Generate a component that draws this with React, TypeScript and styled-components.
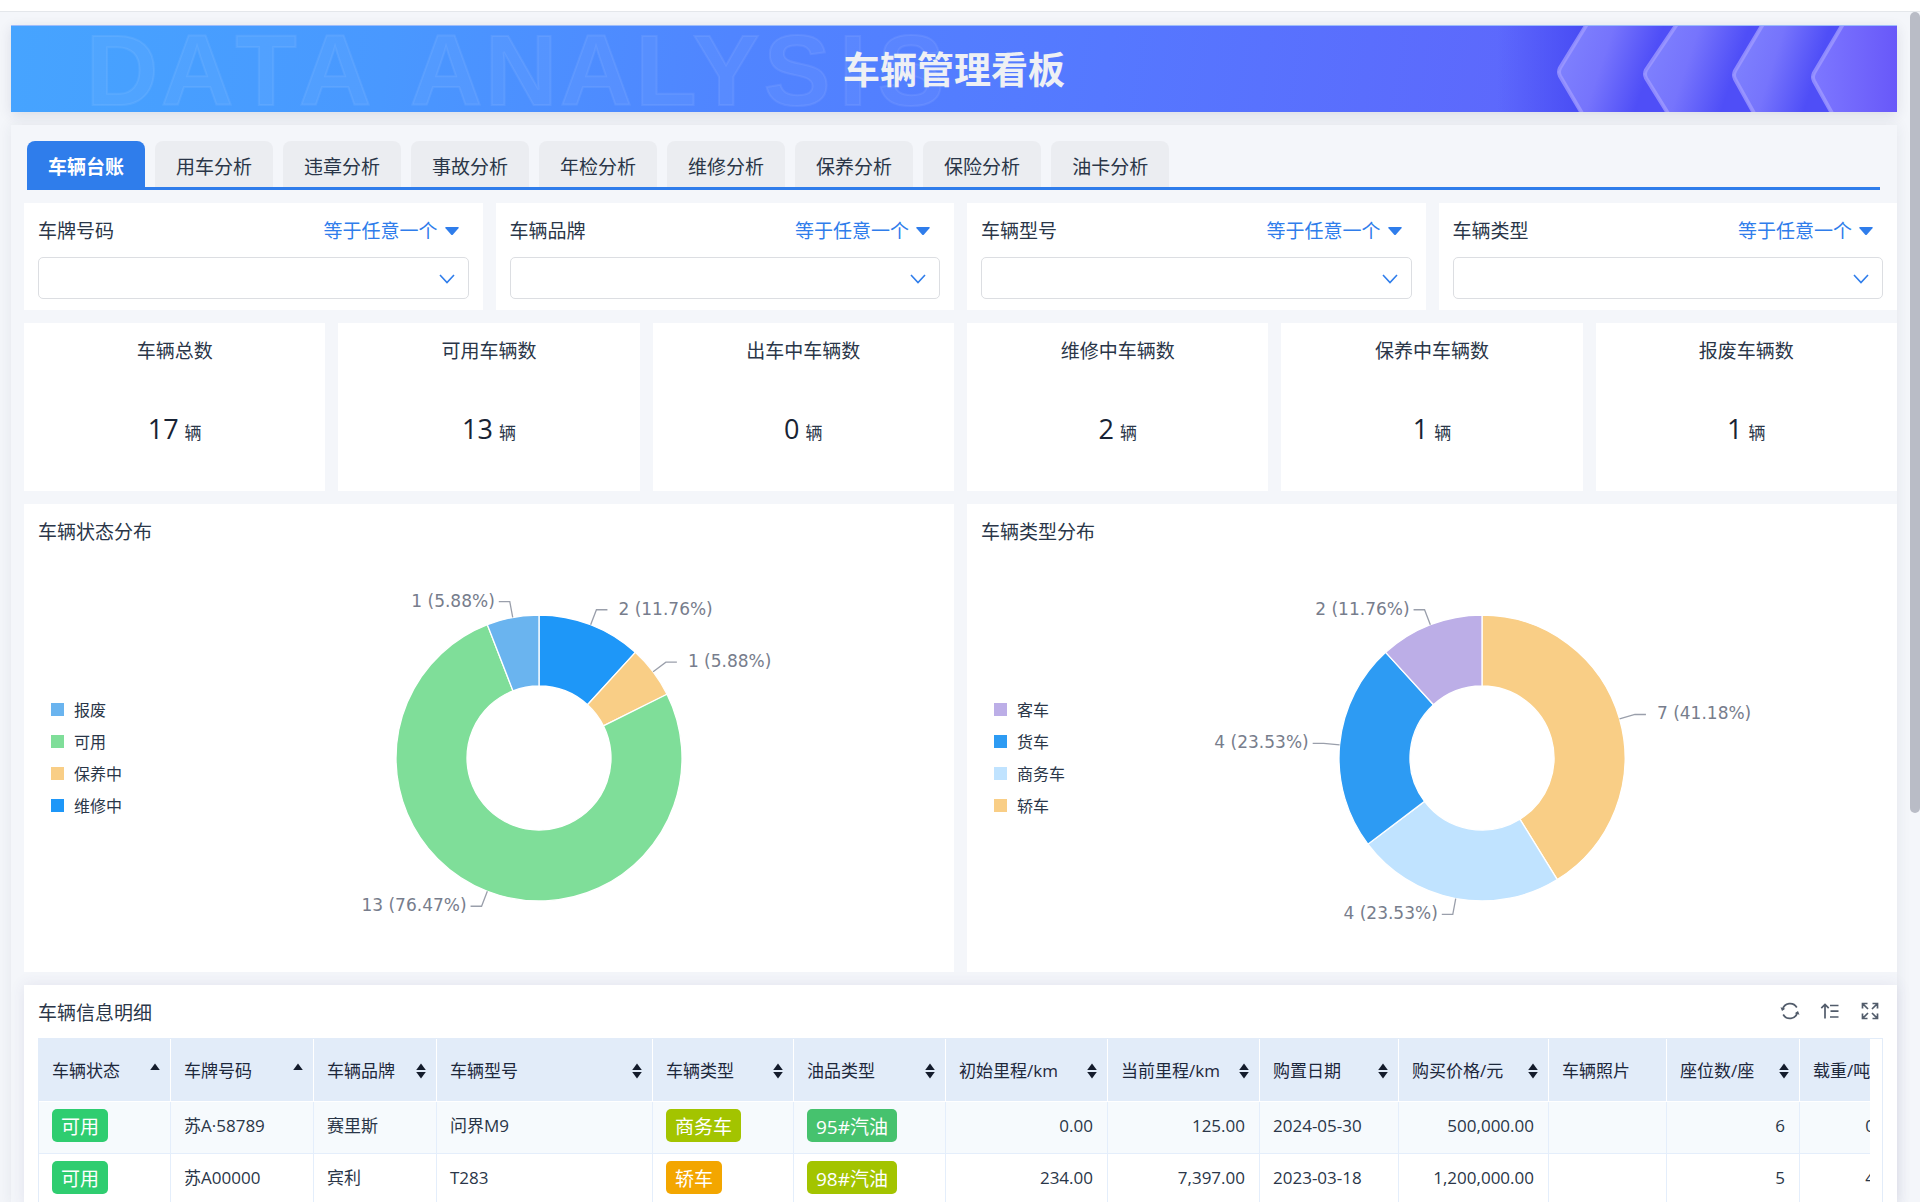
import React from "react";
import styled, { createGlobalStyle } from "styled-components";

const uiFont = `"Open Sans", "Noto Sans CJK SC", sans-serif`;
const blue = "#2f7deb";
const ink = "#2a3648";

const GlobalStyle = createGlobalStyle`
  * { box-sizing: border-box; }
  body { margin: 0; background: #f4f6fa; color: ${ink}; font-family: ${uiFont}; font-size: 19px; line-height: 28px; }
  button, select { font: inherit; color: inherit; }
  h1, h2 { margin: 0; font-weight: 400; font-size: 19px; }
`;

const Shell = styled.div`
  position: relative;
  height: 100vh;
  overflow: hidden;
  display: flex;
  flex-direction: column;
`;

const TopStrip = styled.div`
  flex: none;
  height: 12px;
  background: #fff;
  border-bottom: 1px solid #e4e7eb;
`;

const ScrollThumb = styled.div`
  position: absolute;
  top: 12px;
  right: 0;
  width: 10px;
  height: 801px;
  border-radius: 5px;
  background: #b9bcc6;
`;

const Main = styled.main`
  flex: none;
  padding: 13px 23px 0 11px;
  display: flex;
  flex-direction: column;
  gap: 13px;
`;

const Banner = styled.header`
  position: relative;
  height: 87px;
  overflow: hidden;
  display: flex;
  align-items: center;
  justify-content: center;
  border-top: 1px solid #9dbcfb;
  background: linear-gradient(98deg, #46a4ff 0%, #4998ff 20%, #5085ff 38%, #5578ff 58%, #5d68fc 80%, #5a5cf8 100%);
`;

const BannerShadow = styled.div`
  box-shadow: 0 3px 12px rgba(40, 45, 80, 0.12);
`;

const BannerTitle = styled.h1`
  position: relative;
  padding-top: 2px;
  font-size: 37px;
  line-height: 54px;
  font-weight: 700;
  color: #eef0f4;
`;

const LetterArt = styled.svg`
  position: absolute;
  left: 0;
  top: -1px;
  width: 960px;
  height: 87px;
`;

const ChevronArt = styled.svg`
  position: absolute;
  right: 0;
  top: 0;
  width: 400px;
  height: 87px;
`;

const Panel = styled.div`
  padding: 16px 0 0 13px;
  box-shadow: 0 0 14px rgba(40, 45, 80, 0.08);
  background: #f4f6fa;
  display: flex;
  flex-direction: column;
  gap: 13px;
`;

const Tabs = styled.nav`
  display: flex;
  gap: 10px;
  height: 49px;
  margin: 0 17px 0 3px;
  border-bottom: 3px solid ${blue};
`;

const Tab = styled.button<{ $active?: boolean }>`
  border: 0;
  padding: 6px 21px 0;
  border-radius: 8px 8px 0 0;
  background: ${(p) => (p.$active ? blue : "#ebedf1")};
  color: ${(p) => (p.$active ? "#fff" : ink)};
  font-weight: ${(p) => (p.$active ? 700 : 400)};
`;

const Grid = styled.div<{ $cols: number }>`
  display: grid;
  grid-template-columns: repeat(${(p) => p.$cols}, minmax(0, 1fr));
  gap: 13px;
`;

const Card = styled.section`
  background: #fff;
`;

const FilterCard = styled(Card)`
  padding: 14px 14px 11px;
  display: flex;
  flex-direction: column;
  gap: 12px;
`;

const FilterHead = styled.div`
  display: flex;
  justify-content: space-between;
  align-items: center;
`;

const Operator = styled.button`
  border: 0;
  padding: 0 10px 0 0;
  background: none;
  color: ${blue};
  display: flex;
  align-items: center;
  gap: 7px;
`;

const SelectWrap = styled.div`
  position: relative;
  height: 42px;
`;

const Select = styled.select`
  appearance: none;
  width: 100%;
  height: 42px;
  padding: 0 40px 0 12px;
  border: 1px solid #dcdee2;
  border-radius: 5px;
  background: #fff;
`;

const Chevron = styled.svg`
  position: absolute;
  right: 14px;
  top: 17px;
  pointer-events: none;
`;

const StatCard = styled(Card)`
  height: 168px;
  padding-top: 14px;
  text-align: center;
`;

const StatValue = styled.div`
  margin-top: 43px;
  font-size: 27px;
  line-height: 42px;
  display: flex;
  justify-content: center;
  align-items: baseline;
  gap: 6px;
  color: #182334;
`;

const Unit = styled.span`
  font-size: 17px;
  color: ${ink};
`;

const ChartCard = styled(Card)`
  height: 468px;
  padding: 14px 14px 3px;
  display: flex;
  flex-direction: column;
`;

const ChartBody = styled.div`
  flex: 1;
  display: flex;
  align-items: center;
`;

const Legend = styled.ul`
  flex: none;
  width: 150px;
  margin: 0;
  padding: 0 0 0 13px;
  list-style: none;
  display: flex;
  flex-direction: column;
  gap: 8px;
  font-size: 16px;
  line-height: 24px;
`;

const LegendItem = styled.li`
  display: flex;
  align-items: center;
  gap: 10px;
`;

const Swatch = styled.span<{ $color: string }>`
  width: 13px;
  height: 13px;
  background: ${(p) => p.$color};
`;

const Donut = styled.svg`
  flex: none;
  width: 700px;
  height: 400px;
`;

const SliceLabel = styled.text`
  font-family: "DejaVu Sans", sans-serif;
  font-size: 17px;
  fill: #777d8c;
`;

const TableCard = styled(Card)`
  padding: 14px 14px 0;
  box-shadow: 0 0 14px rgba(70, 60, 130, 0.1);
`;

const TableHead = styled.div`
  display: flex;
  justify-content: space-between;
  align-items: center;
  margin-bottom: 11px;
`;

const Tools = styled.div`
  display: flex;
  gap: 20px;
  padding: 0 3px 4px 0;
`;

const Tool = styled.button`
  display: flex;
  border: 0;
  padding: 0;
  background: none;
  width: 20px;
  height: 20px;
  color: #525c6b;
`;

const TableFrame = styled.div`
  border: 1px solid #e2ecf9;
  border-bottom: 0;
  padding-right: 12px;
`;

const TableScroll = styled.div`
  overflow: hidden;
`;

const Table = styled.table`
  table-layout: fixed;
  width: 1875px;
  border-collapse: separate;
  border-spacing: 0;
  font-size: 17px;
  line-height: 26px;
`;

const Th = styled.th`
  height: 63px;
  padding: 2px 10px 0 13px;
  font-weight: 400;
  text-align: left;
  background: #e2ecf9;
  border-right: 1px solid #fff;
  border-bottom: 1px solid #fff;
  color: #1d283c;
`;

const ThInner = styled.div`
  display: flex;
  justify-content: space-between;
  align-items: center;
  white-space: nowrap;
`;

const Td = styled.td<{ $num?: boolean }>`
  height: 52px;
  padding: 0 14px 4px 13px;
  white-space: nowrap;
  text-align: ${(p) => (p.$num ? "right" : "left")};
  border-right: 1px solid #e4eefb;
  border-bottom: 1px solid #e4eefb;
`;

const Tr = styled.tr<{ $alt?: boolean }>`
  background: ${(p) => (p.$alt ? "#f6fafd" : "#fff")};
`;

const Tag = styled.span<{ $color: string }>`
  display: inline-block;
  vertical-align: middle;
  padding: 4px 9px 0;
  border-radius: 5px;
  background: ${(p) => p.$color};
  color: #fff;
  font-size: 19px;
  line-height: 29px;
`;

const tabs = ["车辆台账", "用车分析", "违章分析", "事故分析", "年检分析", "维修分析", "保养分析", "保险分析", "油卡分析"];
const filters = ["车牌号码", "车辆品牌", "车辆型号", "车辆类型"];
const stats: [string, number][] = [
  ["车辆总数", 17],
  ["可用车辆数", 13],
  ["出车中车辆数", 0],
  ["维修中车辆数", 2],
  ["保养中车辆数", 1],
  ["报废车辆数", 1],
];

type Slice = { name: string; value: number; color: string };
const statusSlices: Slice[] = [
  { name: "维修中", value: 2, color: "#1e97f8" },
  { name: "保养中", value: 1, color: "#f9ce86" },
  { name: "可用", value: 13, color: "#7fde99" },
  { name: "报废", value: 1, color: "#6ab4ef" },
];
const typeSlices: Slice[] = [
  { name: "轿车", value: 7, color: "#f9ce86" },
  { name: "商务车", value: 4, color: "#c0e3ff" },
  { name: "货车", value: 4, color: "#2d9bf3" },
  { name: "客车", value: 2, color: "#bcaee7" },
];

const bannerLetters: [string, number][] = [
  ["D", 111], ["A", 186], ["T", 255], ["A", 324], ["A", 435], ["N", 510], ["A", 585],
  ["L", 655], ["Y", 715], ["S", 786], ["I", 842], ["S", 900],
];

const columns: { title: string; width: number; sort?: "up" | "both" }[] = [
  { title: "车辆状态", width: 132, sort: "up" },
  { title: "车牌号码", width: 143, sort: "up" },
  { title: "车辆品牌", width: 123, sort: "both" },
  { title: "车辆型号", width: 216, sort: "both" },
  { title: "车辆类型", width: 141, sort: "both" },
  { title: "油品类型", width: 152, sort: "both" },
  { title: "初始里程/km", width: 162, sort: "both" },
  { title: "当前里程/km", width: 152, sort: "both" },
  { title: "购置日期", width: 139, sort: "both" },
  { title: "购买价格/元", width: 150, sort: "both" },
  { title: "车辆照片", width: 118 },
  { title: "座位数/座", width: 133, sort: "both" },
  { title: "载重/吨", width: 114 },
];

const rows = [
  { plate: "苏A·58789", brand: "赛里斯", model: "问界M9", type: "商务车", typeColor: "#a3c400", fuel: "95#汽油", fuelColor: "#46c26e", start: "0.00", now: "125.00", date: "2024-05-30", price: "500,000.00", seats: "6", load: "0.00" },
  { plate: "苏A00000", brand: "宾利", model: "T283", type: "轿车", typeColor: "#f3a600", fuel: "98#汽油", fuelColor: "#a3c400", start: "234.00", now: "7,397.00", date: "2023-03-18", price: "1,200,000.00", seats: "5", load: "4.00" },
];

function DonutChart({ slices }: { slices: Slice[] }) {
  const cx = 351;
  const cy = 200;
  const R = 143;
  const r = 72;
  const total = slices.reduce((sum, s) => sum + s.value, 0);
  const at = (angle: number, radius: number) => [cx + Math.sin(angle) * radius, cy - Math.cos(angle) * radius];
  let start = 0;
  return (
    <Donut viewBox="0 0 700 400" role="img">
      {slices.map((s) => {
        const a0 = start;
        const a1 = start + (s.value / total) * Math.PI * 2;
        start = a1;
        const mid = (a0 + a1) / 2;
        const large = a1 - a0 > Math.PI ? 1 : 0;
        const [x0, y0] = at(a0, R);
        const [x1, y1] = at(a1, R);
        const [x2, y2] = at(a1, r);
        const [x3, y3] = at(a0, r);
        const [lx, ly] = at(mid, R);
        const [ex, ey] = at(mid, R + 16);
        const side = mid < Math.PI ? 1 : -1;
        return (
          <g key={s.name}>
            <path
              d={`M${x0} ${y0}A${R} ${R} 0 ${large} 1 ${x1} ${y1}L${x2} ${y2}A${r} ${r} 0 ${large} 0 ${x3} ${y3}Z`}
              fill={s.color}
              stroke="#fff"
              strokeWidth="1.3"
            />
            <path d={`M${lx} ${ly}L${ex} ${ey}H${ex + side * 11}`} fill="none" stroke="#9a9fab" strokeWidth="1.3" />
            <SliceLabel x={ex + side * (side > 0 ? 22 : 15)} y={ey + 5} textAnchor={side > 0 ? "start" : "end"}>
              {`${s.value} (${((s.value / total) * 100).toFixed(2)}%)`}
            </SliceLabel>
          </g>
        );
      })}
    </Donut>
  );
}

function ChartPanel({ title, slices }: { title: string; slices: Slice[] }) {
  return (
    <ChartCard>
      <h2>{title}</h2>
      <ChartBody>
        <Legend>
          {[...slices].reverse().map((s) => (
            <LegendItem key={s.name}>
              <Swatch $color={s.color} />
              {s.name}
            </LegendItem>
          ))}
        </Legend>
        <DonutChart slices={slices} />
      </ChartBody>
    </ChartCard>
  );
}

const chevrons = [
  { top: 88, apex: 61, mid: 46, bottom: 84 },
  { top: 178, apex: 147, mid: 48, bottom: 170 },
  { top: 264, apex: 236, mid: 49, bottom: 256 },
  { top: 344, apex: 315, mid: 51, bottom: 334 },
];

function BannerArt() {
  return (
    <>
      <LetterArt viewBox="0 0 960 87" aria-hidden="true">
        {bannerLetters.map(([ch, x]) => (
          <text
            key={x}
            x={x}
            y="80"
            textAnchor="middle"
            fontFamily='"Liberation Sans", sans-serif'
            fontWeight="700"
            fontSize="100"
            fill="#fff"
            fillOpacity="0.05"
            stroke="#fff"
            strokeOpacity="0.07"
            strokeWidth="2"
          >
            {ch}
          </text>
        ))}
      </LetterArt>
      <ChevronArt viewBox="0 0 400 87" aria-hidden="true">
        <defs>
          <linearGradient id="lead" x1="0" x2="1">
            <stop offset="0" stopColor="#4a4df5" stopOpacity="0" />
            <stop offset="1" stopColor="#484bf4" />
          </linearGradient>
          <linearGradient id="fold" x1="0" x2="1" y1="0" y2="0.25">
            <stop offset="0.050" stopColor="#8083fe" />
            <stop offset="0.450" stopColor="#7674fc" />
            <stop offset="0.850" stopColor="#4f4ef7" />
          </linearGradient>
          <linearGradient id="last" x1="0" x2="1">
            <stop offset="0" stopColor="#7d78ff" />
            <stop offset="1" stopColor="#6858f9" />
          </linearGradient>
        </defs>
        <path d="M0 0H88L61 46L84 87H0Z" fill="url(#lead)" />
        {chevrons.map((c, i) => {
          const next = chevrons[i + 1];
          const right = next ? `H${next.bottom}L${next.apex} ${next.mid}L${next.top} 0` : "H400V0";
          return (
            <g key={c.apex}>
              <path d={`M${c.top} 0L${c.apex} ${c.mid}L${c.bottom} 87${right}Z`} fill={next ? "url(#fold)" : "url(#last)"} />
              <path
                d={`M${c.top + 2} -2L${c.apex + 2} ${c.mid - 4}Q${c.apex} ${c.mid} ${c.apex + 2} ${c.mid + 4}L${c.bottom + 2} 89`}
                fill="none"
                stroke="#a19cff"
                strokeOpacity="0.75"
                strokeWidth="4"
              />
            </g>
          );
        })}
      </ChevronArt>
    </>
  );
}

function SortMark({ kind }: { kind: "up" | "both" }) {
  return (
    <svg width="10" height="16" viewBox="0 0 10 16" aria-hidden="true" fill="#141c2c">
      <path d="M5 0.500L9.800 7H0.200Z" />
      {kind === "both" && <path d="M5 15.500L9.800 9H0.200Z" />}
    </svg>
  );
}

export default function App() {
  return (
    <Shell>
      <GlobalStyle />
      <TopStrip />
      <Main>
        <BannerShadow>
          <Banner>
            <BannerArt />
            <BannerTitle>车辆管理看板</BannerTitle>
          </Banner>
        </BannerShadow>
        <Panel>
          <Tabs>
            {tabs.map((t, i) => (
              <Tab key={t} $active={i === 0}>
                {t}
              </Tab>
            ))}
          </Tabs>
          <Grid $cols={4}>
            {filters.map((f, i) => (
              <FilterCard key={f}>
                <FilterHead>
                  <label htmlFor={`filter-${i}`}>{f}</label>
                  <Operator>
                    等于任意一个
                    <svg width="14" height="8" viewBox="0 0 14 8" aria-hidden="true">
                      <path d="M1 0H13Q14.500 0 13.500 1.200L8 7.500Q7 8.500 6 7.500L0.500 1.200Q-.5 0 1 0Z" fill={blue} />
                    </svg>
                  </Operator>
                </FilterHead>
                <SelectWrap>
                  <Select id={`filter-${i}`} defaultValue="">
                    <option value="" />
                  </Select>
                  <Chevron width="16" height="10" viewBox="0 0 16 10" aria-hidden="true">
                    <path d="M1 1L8 8.500L15 1" fill="none" stroke={blue} strokeWidth="1.600" />
                  </Chevron>
                </SelectWrap>
              </FilterCard>
            ))}
          </Grid>
          <Grid $cols={6}>
            {stats.map(([name, value]) => (
              <StatCard key={name}>
                <h2>{name}</h2>
                <StatValue>
                  {value}
                  <Unit>辆</Unit>
                </StatValue>
              </StatCard>
            ))}
          </Grid>
          <Grid $cols={2}>
            <ChartPanel title="车辆状态分布" slices={statusSlices} />
            <ChartPanel title="车辆类型分布" slices={typeSlices} />
          </Grid>
          <TableCard>
            <TableHead>
              <h2>车辆信息明细</h2>
              <Tools>
                <Tool aria-label="刷新">
                  <svg width="20" height="20" viewBox="0 0 20 20" fill="none" stroke="currentColor" strokeWidth="1.700">
                    <path d="M2.600 8.500A7.700 7.700 0 0 1 16.800 6.500M17.400 11.500A7.700 7.700 0 0 1 3.200 13.500" />
                    <path d="M0.500 6.200L5.300 7.800L2 10ZM19.500 13.800L14.700 12.200L18 10Z" fill="currentColor" stroke="none" />
                  </svg>
                </Tool>
                <Tool aria-label="排序">
                  <svg width="20" height="20" viewBox="0 0 20 20" fill="none" stroke="currentColor" strokeWidth="1.700">
                    <path d="M5 17.500V3.500M1.300 7.200L5 3.500L8.700 7.200M10 4.500H18.500M10.500 10.200H18.500M10 16H18.500" />
                  </svg>
                </Tool>
                <Tool aria-label="全屏">
                  <svg width="20" height="20" viewBox="0 0 20 20" fill="none" stroke="currentColor" strokeWidth="1.700">
                    <path d="M2.500 7.500V2.500H7.500M12.500 2.500H17.500V7.500M17.500 12.500V17.500H12.500M7.500 17.500H2.500V12.500M2.500 2.500L8 8M17.500 2.500L12 8M17.500 17.500L12 12M2.500 17.500L8 12" />
                  </svg>
                </Tool>
              </Tools>
            </TableHead>
            <TableFrame>
              <TableScroll>
                <Table>
                  <colgroup>
                    {columns.map((c) => (
                      <col key={c.title} style={{ width: c.width }} />
                    ))}
                  </colgroup>
                  <thead>
                    <tr>
                      {columns.map((c) => (
                        <Th key={c.title}>
                          <ThInner>
                            {c.title}
                            {c.sort && <SortMark kind={c.sort} />}
                          </ThInner>
                        </Th>
                      ))}
                    </tr>
                  </thead>
                  <tbody>
                    {rows.map((row, i) => (
                      <Tr key={row.plate} $alt={i % 2 === 0}>
                        <Td><Tag $color="#2fcd70">可用</Tag></Td>
                        <Td>{row.plate}</Td>
                        <Td>{row.brand}</Td>
                        <Td>{row.model}</Td>
                        <Td><Tag $color={row.typeColor}>{row.type}</Tag></Td>
                        <Td><Tag $color={row.fuelColor}>{row.fuel}</Tag></Td>
                        <Td $num>{row.start}</Td>
                        <Td $num>{row.now}</Td>
                        <Td>{row.date}</Td>
                        <Td $num>{row.price}</Td>
                        <Td />
                        <Td $num>{row.seats}</Td>
                        <Td $num>{row.load}</Td>
                      </Tr>
                    ))}
                  </tbody>
                </Table>
              </TableScroll>
            </TableFrame>
          </TableCard>
        </Panel>
      </Main>
      <ScrollThumb />
    </Shell>
  );
}
